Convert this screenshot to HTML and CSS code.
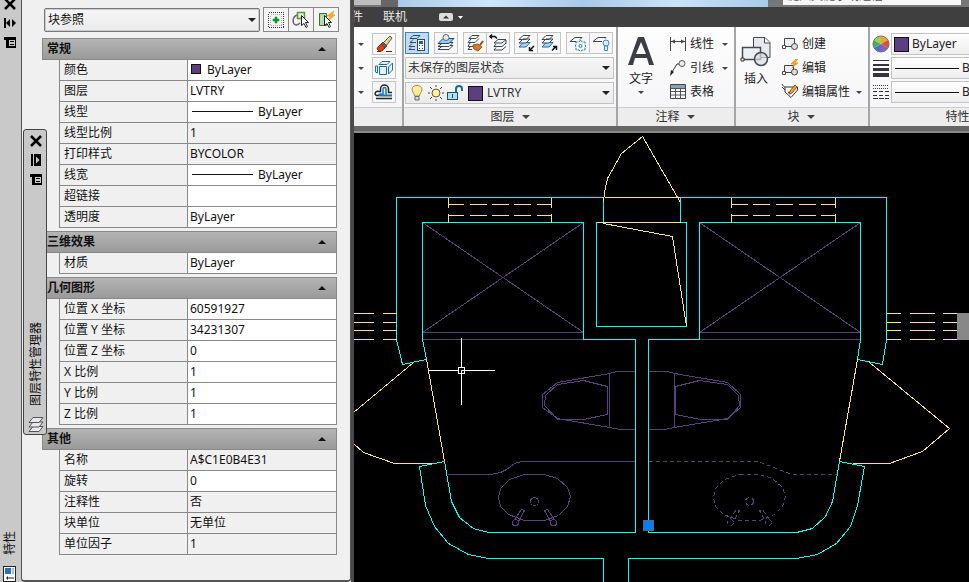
FILE: index.html
```
<!DOCTYPE html>
<html lang="zh-CN">
<head>
<meta charset="utf-8">
<title>图层特性</title>
<link rel="stylesheet" href="styles.css">
</head>
<body>
<svg class="defs" aria-hidden="true">
  <symbol id="i-close" viewBox="0 0 12 12"><path d="M1 1l10 10M11 1L1 11" stroke="#000" stroke-width="2.500"/></symbol>
  <symbol id="i-autohide" viewBox="0 0 12 12"><path d="M0 1h2v10H0zM2 6l4-4v8zM8 2l4 4-4 4z"/></symbol>
  <symbol id="i-pin" viewBox="0 0 12 12"><path d="M1 0h2v12H1z"/><path fill-rule="evenodd" d="M4 0h7v12H4zm2 2.500v7L9.500 6z"/></symbol>
  <symbol id="i-menu" viewBox="0 0 12 12"><path fill-rule="evenodd" d="M0 1h12v11H2V4H0zM5 4v6h6V4z"/><path d="M6 5h4v1H6zM6 8h4v1H6z"/></symbol>
  <symbol id="sheets" viewBox="0 0 18 18"><g class="sheet"><path d="M6 11.500h10l-4 5H2z"/><path d="M6 7h10l-4 5H2z"/><path d="M6 2.500h10l-4 5H2z"/></g></symbol>
</svg>

<aside class="palette">
  <div class="spine">
    <button class="spine-btn" aria-label="关闭"><svg class="i12"><use href="#i-close"/></svg></button>
    <button class="spine-btn" aria-label="自动隐藏"><svg class="i12"><use href="#i-autohide"/></svg></button>
    <button class="spine-btn" aria-label="菜单"><svg class="i12"><use href="#i-menu"/></svg></button>
    <span class="spine-title">特性</span>
    <svg class="spine-logo" viewBox="0 0 14 16"><rect x=".5" y=".5" width="12" height="15" fill="#fff" stroke="#222"/><path d="M2 2h6v6H2z" fill="#2a6fb5"/><path d="M9 2h2v6H9z" fill="#9cc0e0"/><path d="M3 12l2-2v1.500h6v1H5V14z" fill="#222"/></svg>
  </div>
  <div class="sheet-panel">
    <div class="picker">
      <label class="combo object-type"><select aria-label="对象类型"><option>块参照</option></select></label>
      <div class="tools">
        <button aria-label="切换 PICKADD"><svg viewBox="0 0 18 18"><rect x="1.500" y="1.500" width="15" height="15" fill="none" stroke="#333" stroke-dasharray="1 1" shape-rendering="crispEdges"/><rect x="3.500" y="3.500" width="11" height="11" fill="none" stroke="#aaa" stroke-dasharray="1 1" shape-rendering="crispEdges"/><path d="M8 6h2v2h2v2h-2v2H8v-2H6V8h2z" fill="#0a9a1e" stroke="#0a9a1e" stroke-width=".5"/></svg></button>
        <button aria-label="选择对象"><svg viewBox="0 0 18 18"><path d="M5 4C0 6 0 13 4 14c2 0 3-1 4-2" fill="none" stroke="#667" stroke-width="1.500"/><rect x="5.500" y="1.500" width="7" height="6" fill="#dff0d2" stroke="#5e9448" stroke-width="1.500"/><path d="M9.500 4.500v10l2.500-2 2 4 1.500-1-2-4h3z" fill="#fff" stroke="#222"/></svg></button>
        <button aria-label="快速选择"><svg viewBox="0 0 18 18"><path d="M2.500 2.500h7v12h-7z" fill="#b5dda6" stroke="#41702f"/><path d="M17 0l-7 5h3l-2 5 7-6h-3z" fill="#ffb21a" stroke="#d98200" stroke-width=".5"/><path d="M7.500 4.500v10l2.500-2 2 4 1.500-1-2-4h3z" fill="#fff" stroke="#222"/></svg></button>
      </div>
    </div>
    <section class="group">
      <button class="group-head">常规</button>
      <table>
        <tr><th scope="row">颜色</th><td class="edit"><span class="swatch"></span>ByLayer</td></tr>
        <tr><th scope="row"><label for="f-layer">图层</label></th><td class="edit"><input id="f-layer" value="LVTRY"></td></tr>
        <tr><th scope="row">线型</th><td class="edit"><span class="rule"></span>ByLayer</td></tr>
        <tr><th scope="row">线型比例</th><td>1</td></tr>
        <tr><th scope="row">打印样式</th><td>BYCOLOR</td></tr>
        <tr><th scope="row">线宽</th><td class="edit"><span class="rule"></span>ByLayer</td></tr>
        <tr><th scope="row"><label for="f-link">超链接</label></th><td class="edit"><input id="f-link" value=""></td></tr>
        <tr><th scope="row"><label for="f-tr">透明度</label></th><td class="edit"><input id="f-tr" value="ByLayer"></td></tr>
      </table>
    </section>
    <section class="group">
      <button class="group-head">三维效果</button>
      <table>
        <tr><th scope="row"><label for="f-mat">材质</label></th><td class="edit"><input id="f-mat" value="ByLayer"></td></tr>
      </table>
    </section>
    <section class="group">
      <button class="group-head">几何图形</button>
      <table>
        <tr><th scope="row"><label for="f-px">位置 X 坐标</label></th><td class="edit"><input id="f-px" value="60591927"></td></tr>
        <tr><th scope="row"><label for="f-py">位置 Y 坐标</label></th><td class="edit"><input id="f-py" value="34231307"></td></tr>
        <tr><th scope="row"><label for="f-pz">位置 Z 坐标</label></th><td class="edit"><input id="f-pz" value="0"></td></tr>
        <tr><th scope="row"><label for="f-sx">X 比例</label></th><td class="edit"><input id="f-sx" value="1"></td></tr>
        <tr><th scope="row"><label for="f-sy">Y 比例</label></th><td class="edit"><input id="f-sy" value="1"></td></tr>
        <tr><th scope="row"><label for="f-sz">Z 比例</label></th><td class="edit"><input id="f-sz" value="1"></td></tr>
      </table>
    </section>
    <section class="group">
      <button class="group-head">其他</button>
      <table>
        <tr><th scope="row">名称</th><td>A$C1E0B4E31</td></tr>
        <tr><th scope="row"><label for="f-rot">旋转</label></th><td class="edit"><input id="f-rot" value="0"></td></tr>
        <tr><th scope="row">注释性</th><td>否</td></tr>
        <tr><th scope="row">块单位</th><td>无单位</td></tr>
        <tr><th scope="row">单位因子</th><td>1</td></tr>
      </table>
    </section>
  </div>
  <div class="floating">
    <button class="spine-btn" aria-label="关闭"><svg class="i12"><use href="#i-close"/></svg></button>
    <button class="spine-btn" aria-label="锚定"><svg class="i12"><use href="#i-pin"/></svg></button>
    <button class="spine-btn" aria-label="菜单"><svg class="i12"><use href="#i-menu"/></svg></button>
    <span class="spine-title">图层特性管理器</span>
    <svg class="i18"><use href="#sheets"/></svg>
  </div>
</aside>

<main class="app">
  <header class="titlebar">
    <span class="tb-light"></span><span class="tb-dark"></span><span class="tb-blue"></span>
    <span class="tb-search">键入关键字或短语</span><span class="tb-end"></span>
  </header>
  <nav class="tabs">
    <a href="#plugins" class="cut">插件</a>
    <a href="#online">联机</a>
    <button class="minimize" aria-label="最小化功能区"><svg viewBox="0 0 26 8"><rect width="14" height="8" rx="2" fill="#ddd"/><path d="M4 5.500h6L7 2.500z" fill="#333"/><path d="M19 3h5l-2.500 3z" fill="#fff"/></svg></button>
  </nav>
  <div class="ribbon">
    <section class="panel modify">
      <div class="body">
        <div class="mod-row"><i class="caret"></i><button class="tool" aria-label="删除"><svg viewBox="0 0 20 20"><path d="M3 17.500h4M12 17.500h6" stroke="#333"/><path d="M9 9l7-7 2 2-6 8z" fill="#f1cf92" stroke="#554"/><path d="M7 10l2-2 4 4-2 2z" fill="#5a626a" stroke="#444"/><path d="M4 13l3-3 4 4-3 3H5l-2-2z" fill="#d9430f" stroke="#a32a00"/></svg></button></div>
        <div class="mod-row"><i class="caret"></i><button class="tool" aria-label="分解"><svg viewBox="0 0 20 20"><g fill="#e4f2fc" stroke="#1a6ea8"><path d="M5.500 8.500h7v8h-7z"/><path d="M5 6.500l3-3h8l-3 3z"/><path d="M14.500 9l4-4v7l-4 4z"/><path d="M3.500 8v7l-2-1V8z"/></g></svg></button></div>
        <div class="mod-row"><i class="caret"></i><button class="tool" aria-label="偏移"><svg viewBox="0 0 20 20"><path d="M2 16.500h16" stroke="#222" stroke-width="1.500"/><path d="M18 10.500h-3.500V7a4 4 0 0 0-8 0v2.500h-2a2 2 0 0 0-2 4H18" fill="none" stroke="#222" stroke-width="1.500"/><path d="M18 13.500H6.500c-2 0-2-1.500 0-1.500H9V7c0-2 3-2 3 0v6" fill="none" stroke="#167bc4" stroke-width="1.500"/></svg></button></div>
      </div>
      <h2 class="title"></h2>
    </section>

    <section class="panel layers">
      <div class="body">
        <div class="bar">
          <div class="set"><button class="tool on" aria-label="图层特性"><svg viewBox="0 0 20 20"><g class="ln"><path d="M6 2.500h7l-3 3H3zM6 6.500L3 9.500h6M5 10.500l-3 3h6M8 16.500H2l2-2"/></g><rect x="10.500" y="6.500" width="7" height="11" fill="#fff" stroke="#345"/><path d="M12 8h4v3h-4z" fill="#1b65a8"/><path d="M12 12h1v1h-1zm3 0h1v1h-1zm-3 3h1v1h-1zm3 0h1v1h-1z" fill="#345"/></svg></button></div>
          <div class="set"><button class="tool" aria-label="置为当前"><svg viewBox="0 0 20 20"><g class="ln full"><path d="M7 12.500h10l-4 4H2z"/><path d="M7 9.500h10l-4 4H2z"/></g><path d="M7 5.500h11l-5 5H2z" fill="#8fcbf2" stroke="#1c4d75"/><circle cx="10" cy="4.500" r="3" fill="#e8e8e8" stroke="#667"/></svg></button></div>
          <div class="set"><button class="tool" aria-label="匹配"><svg viewBox="0 0 20 20"><g class="ln"><path d="M7 2.500h7l-3 3H4zM6 6l-3 3.500h7l4-4M5 10l-2 3.500h5M5 14l-2 2.500h4"/></g><path d="M18 8l-3 4" stroke="#875322" stroke-width="2"/><path d="M8 12l5-1 4 3-4 4-4-2z" fill="#d97c2a" stroke="#9b540c"/></svg></button><button class="tool" aria-label="上一个"><svg viewBox="0 0 20 20"><path d="M2 3.500h5l2 2M4 1.500l-2 2 2 2" fill="none" stroke="#111" stroke-width="1.500"/><g class="ln"><path d="M10 6.500h8l-4 3.500H6zM8 11l-2 2.500h8l4-3.500M8 14.500l-2 2.500h8l4-3.500M18 7v3.500"/></g></svg></button></div>
          <div class="set"><button class="tool" aria-label="隔离"><svg viewBox="0 0 20 20"><path d="M7 9.500h7l-4 4.500H3z" fill="#a4d8f8" stroke="#1470b8"/><g class="ln full"><path d="M7 6h7l-4 4H3zM7 2.500h7l-4 4H3z"/></g><path d="M18 13l-4 4M13.500 14v3.500H17" fill="none" stroke="#111" stroke-width="1.500"/></svg></button><button class="tool" aria-label="取消隔离"><svg viewBox="0 0 20 20"><path d="M7 9.500h7l-4 4.500H3z" fill="#a4d8f8" stroke="#1470b8"/><g class="ln full"><path d="M7 6h7l-4 4H3zM7 2.500h7l-4 4H3z"/></g><path d="M13 17.500l4-4M14 13.500h3.500V17" fill="none" stroke="#111" stroke-width="1.500"/></svg></button></div>
          <div class="set"><button class="tool" aria-label="冻结"><svg viewBox="0 0 20 20"><path d="M8 8.500H2l5-4h7l-2 2" fill="none" stroke="#445"/><path d="M12.500 7l1.500 2h3v3l1 1-1 1v3h-3l-1.500 1.500L11 17H8v-3l-1-1 1-1V9h3z" fill="#fff" stroke="#1680c8" stroke-dasharray="3 1"/><circle cx="12.500" cy="13" r="1.500" fill="none" stroke="#1680c8"/></svg></button><button class="tool" aria-label="关闭图层"><svg viewBox="0 0 20 20"><path d="M11 8.500H2l5-4h8l-1 1" fill="none" stroke="#445"/><circle cx="15" cy="10" r="3" fill="#d6eefc" stroke="#3b8fc8"/><path d="M13.500 13h3v4.500h-3z" fill="#d6eefc" stroke="#3b8fc8"/></svg></button></div>
        </div>
        <label class="combo"><select aria-label="图层状态"><option>未保存的图层状态</option></select></label>
        <div class="combo layer-combo">
          <svg viewBox="0 0 18 18"><path d="M6.500 12C6.500 9 4 8 4 5.500 4 0 14 0 14 5.500c0 2.500-2.500 3.500-2.500 6.500z" fill="#ffeb9b" stroke="#a38a37"/><path d="M7 12.500h4v3.500H7z" fill="#ddd" stroke="#666"/></svg>
          <svg viewBox="0 0 18 18"><path d="M9 1v2M9 15v2M1 9h2M15 9h2M3 3l2 2M13 13l2 2M15 3l-2 2M3 15l2-2" stroke="#444"/><circle cx="9" cy="9" r="4" fill="#ffeea3" stroke="#665c31"/></svg>
          <svg viewBox="0 0 18 18"><path d="M10 8V5c0-4 6-4 6 0v2" fill="none" stroke="#176b9d" stroke-width="2"/><rect x="1.500" y="8.500" width="10" height="7" fill="#aedff5" stroke="#264f68"/><path d="M6.500 10v4" stroke="#264f68"/></svg>
          <span class="chip"></span>
          <select aria-label="图层"><option>LVTRY</option></select>
        </div>
      </div>
      <h2 class="title">图层<i class="caret big"></i></h2>
    </section>

    <section class="panel annotate">
      <div class="body cols">
        <button class="large"><svg viewBox="0 0 32 32"><path fill="#3c3e46" fill-rule="evenodd" d="M13 2h6l10 28h-5l-2-7H10l-2 7H3zm3 5l-5 12h10z"/></svg>文字<i class="caret"></i></button>
        <div class="items">
          <button class="item"><svg viewBox="0 0 18 18"><path d="M1.500 2v14M16.500 2v14M2 6.500h14" stroke="#444" fill="none"/><path d="M2 6.500l4-2v4zM16 6.500l-4-2v4z" fill="#444"/></svg>线性<i class="caret"></i></button>
          <button class="item"><svg viewBox="0 0 18 18"><circle cx="13" cy="4.500" r="3" fill="#eee" stroke="#555"/><path d="M10 5H8L3 13" fill="none" stroke="#333"/><path d="M1 17l1-6 3 2z" fill="#222"/></svg>引线<i class="caret"></i></button>
          <button class="item"><svg viewBox="0 0 18 18"><path d="M1.500 1.500h15v14h-15z" fill="#fff" stroke="#444"/><path d="M2 2h14v3H2z" fill="#8aa0b5"/><path d="M2 5.500h14M2 8.500h14M2 12h14M6.500 5v11M11.500 5v11" stroke="#555"/></svg>表格</button>
        </div>
      </div>
      <h2 class="title">注释<i class="caret big"></i></h2>
    </section>

    <section class="panel block">
      <div class="body cols">
        <button class="large"><svg viewBox="0 0 32 32"><path d="M13.500 2.500H25l5 5v15H13.500z" fill="#e5e8ec" stroke="#444b55"/><path d="M24.500 3v5H30" fill="#fff" stroke="#444b55"/><path d="M2.500 12.500h18v12h-18z" fill="#edf0f3" stroke="#444b55" stroke-width="1.500"/><circle cx="21" cy="24" r="6.500" fill="#d8dde2" fill-opacity=".7" stroke="#444b55" stroke-width="1.500"/><path d="M1 23h3v3H1z" fill="#fff" stroke="#333"/></svg>插入</button>
        <div class="items">
          <button class="item"><svg viewBox="0 0 18 18"><path d="M3.500 3.500h10v8h-10z" fill="#edf0f3" stroke="#444"/><circle cx="13.500" cy="11.500" r="3" fill="#ddd" stroke="#444"/><path d="M1.500 10.500h3v3h-3z" fill="#fff" stroke="#444"/></svg>创建</button>
          <button class="item"><svg viewBox="0 0 18 18"><path d="M3.500 6.500h9v7h-9z" fill="#edf0f3" stroke="#444"/><circle cx="13.500" cy="13" r="3" fill="#ddd" stroke="#444"/><path d="M1.500 12.500h3v3h-3z" fill="#fff" stroke="#444"/><path d="M15 0l-5 5h3l-2 4 6-5h-3l3-4z" fill="#ffab16" stroke="#d77900" stroke-width=".5"/></svg>编辑</button>
          <button class="item"><svg viewBox="0 0 18 18"><path d="M1 1c1 2 2 3 4 3h11.500v3L10 14.500 4 9V4" fill="#fff" stroke="#333"/><path d="M1 4l3 3M7 9l3 2" stroke="#333"/><path d="M14 2l2 2-5 6-3 1 1-3z" fill="#f5a23c" stroke="#8b4e10"/></svg>编辑属性<i class="caret"></i></button>
        </div>
      </div>
      <h2 class="title">块<i class="caret big"></i></h2>
    </section>

    <section class="panel props">
      <div class="body">
        <div class="prop"><svg viewBox="0 0 18 18"><g transform="translate(9 9)"><path d="M0 0V-8A8 8 0 0 1 7-4z" fill="#f0a531"/><path d="M0 0L7-4A8 8 0 0 1 7 4z" fill="#dd4f3b"/><path d="M0 0L7 4A8 8 0 0 1 0 8z" fill="#9659b5"/><path d="M0 0V8A8 8 0 0 1-7 4z" fill="#4573cf"/><path d="M0 0L-7 4A8 8 0 0 1-7-4z" fill="#4cab62"/><path d="M0 0L-7-4A8 8 0 0 1 0-8z" fill="#a5cf4a"/><circle r="8" fill="none" stroke="#777"/></g></svg><button class="field"><span class="chip"></span>ByLayer</button></div>
        <div class="prop"><svg viewBox="0 0 18 18"><path d="M1 1h16v1H1zM1 5h16v2H1zM1 9h16v3H1zM1 14h16v4H1z" fill="#33343c"/></svg><button class="field"><span class="rule"></span>ByLayer</button></div>
        <div class="prop"><svg viewBox="0 0 18 18"><path d="M1 2.500h16M1 5.500h16" stroke="#444" stroke-dasharray="1 1"/><path d="M1 8.500h16M1 12.500h16" stroke="#333" stroke-dasharray="4 2"/><path d="M1 15.500h16" stroke="#333" stroke-dasharray="5 1"/></svg><button class="field"><span class="rule"></span>ByLayer</button></div>
      </div>
      <h2 class="title">特性<i class="caret big"></i></h2>
    </section>
  </div>

  <svg class="drawing" viewBox="353.500 132.500 615 449" preserveAspectRatio="xMinYMin slice" role="img" aria-label="图纸">
    <g class="violet">
      <path d="M422 222L583 332M583 222L422 332H583M422 339H583M699 222L860 332M860 222L699 332H860M699 339H860"/>
      <path d="M635 371H616L609 373 557 382 542 394V407L557 418 609 427 620 429H635M609 373V427M607 386L583 380 557 384 545 395 544 405 557 419H583L607 414z"/>
      <path d="M648 371H667L674 373 727 382 740 394V407L727 418 674 427 664 429H648M674 373V427M675 386L699 380 727 384 738 395 739 405 727 419H700L675 414z"/>
      <path d="M447 474H490L500 472 506 469 514 463 521 461H635"/>
      <path d="M524 474H544L557 478 567 487 570 496 567 506 558 515 544 520H524L508 514 500 506 498 497 500 488 509 479z"/>
      <circle cx="534" cy="501" r="4"/><circle cx="515" cy="522" r="3"/><circle cx="553" cy="522" r="3"/>
      <path d="M514 519L521 509 524 510 518 521M554 519L547 509 544 510 550 521"/>
      <g stroke-dasharray="4 3">
        <path d="M648 461H758L791 474H836"/>
        <path d="M739 474H759L772 478 782 487 785 496 782 506 773 515 759 520H739L723 514 715 506 713 497 715 488 724 479z"/>
        <circle cx="749" cy="501" r="4"/><circle cx="730" cy="522" r="3"/><circle cx="768" cy="522" r="3"/>
        <path d="M729 519L736 509 739 510 733 521M769 519L762 509 759 510 765 521"/>
      </g>
    </g>
    <g class="cyan">
      <path d="M603 222V197H396V339L402 364 426 359 422 339V222H583V339H635V532H488L473 528 459 517 451 501 444 461 419 466 425 505 434 526 448 543 468 554 488 558H603V583"/>
      <path d="M603 222H596V326H686V222H680V197H886V339L882 364 857 359 860 339V222H699V339H648V532H796L812 528 825 516 832 501 839 461 864 466 857 505 850 526 836 543 817 554 796 558H628V583"/>
    </g>
    <g class="sand">
      <path d="M604 197H679M597 222H680M603 202L604 192 607 178 621 153 642 136 680 202M603 223L672 236 686 326"/>
      <path d="M448 197V207M448 213V222M551 197V207M551 213V222M731 197V207M731 213V222M835 197V207M835 213V222"/>
      <path d="M448 204H463M469 204H486M491 204H508M513 204H530M536 204H551M448 215H463M469 215H486M491 215H508M513 215H530M536 215H551"/>
      <path d="M731 204H747M752 204H769M775 204H792M798 204H815M820 204H835M731 215H747M752 215H769M775 215H792M798 215H815M820 215H835"/>
      <path d="M353 313H373M382 313H396M353 322H373M382 322H396M353 330H373M382 330H396M353 339H373M382 339H396"/>
      <path d="M886 313H900M909 313H934M942 313H957M886 322H900M909 322H934M942 322H957M886 330H900M909 330H934M942 330H957M886 339H900M909 339H934M942 339H957"/>
      <path d="M426 359L444 461M413 362L353 412M353 443L363 452 394 463H431M857 359L839 461M869 362L949 428 922 451 889 463H852"/>
    </g>
    <rect x="956.500" y="312.500" width="13" height="27" fill="#888"/>
    <rect x="643" y="520" width="10" height="10" fill="#0080ff" stroke="#666"/>
    <path d="M427 370H458M464 370H494M461 337V367M461 373V404M458 367H464V373H458zM460 370H463M461 369V372" fill="none" stroke="#fff"/>
  </svg>
</main>
</body>
</html>
```

FILE: styles.css
```
* { box-sizing: border-box; }
html, body { height: 100%; margin: 0; }
body {
  display: flex;
  overflow: hidden;
  background: #000;
  color: #111;
  font: 12px/18px "Noto Sans", "Noto Sans CJK SC", sans-serif;
}
button, input, select { font: inherit; color: inherit; margin: 0; padding: 0; border: 0; background: none; border-radius: 0; }
a { color: inherit; text-decoration: none; }
.defs { position: absolute; width: 0; height: 0; }
svg { flex: none; display: block; }
.i12 { width: 12px; height: 12px; }
.i18 { width: 18px; height: 18px; }
.sheet { fill: #e8e8ee; stroke: #555; }
.ln { fill: none; stroke: #3c4754; }
.ln.full { fill: #f7f7f7; }

/* properties palette */
.palette { position: relative; display: flex; flex: 0 0 354px; background: #c9c9c9; border-right: 3px solid #4a4a4a; }
.spine { display: flex; flex-direction: column; align-items: center; width: 21px; padding: 0 1px 0 0; }
.spine-btn { display: block; height: 19px; }
.spine .spine-btn:first-child { margin-top: -6px; }
.spine-title { margin-top: auto; writing-mode: vertical-rl; text-orientation: sideways; transform: rotate(180deg); }
.spine-logo { width: 14px; height: 16px; margin-top: 11px; }
.sheet-panel {
  flex: 1;
  padding: 7px 11px 0 20px;
  background: #f0f0f0;
  border: solid #555;
  border-width: 0 1px 2px;
  border-radius: 0 0 4px 4px;
}
.picker { display: flex; gap: 3px; height: 31px; padding-left: 2px; }
.object-type { flex: 1; height: 24px; margin-top: 1px; border: 1px solid #777; border-radius: 2px; box-shadow: inset 0 0 0 1px #ccc; }
.tools { display: flex; height: 25px; border: 1px solid #888; }
.tools button { width: 25px; padding: 2px 3px; border-left: 1px solid #888; background: #f4f4f4; }
.tools button:first-child { border-left: 0; width: 24px; }
.tools svg { width: 18px; height: 18px; }
.combo { position: relative; display: flex; align-items: center; background: linear-gradient(#f6f6f6, #ebebeb); }
.combo select { flex: 1; min-width: 0; appearance: none; padding-left: 3px; outline: 0; }
.combo::after { content: ""; position: absolute; right: 3px; border: 4px solid transparent; border-top: 4px solid #222; border-bottom: 0; pointer-events: none; }
.group { margin: 0 2px 3px 0; }
.group-head {
  display: flex;
  align-items: center;
  justify-content: space-between;
  width: 100%;
  height: 22px;
  padding: 0 10px 0 4px;
  border: 1px solid #888;
  background: linear-gradient(#b4b4b4, #9a9a9a);
  font-weight: 700;
}
.group-head::after { content: ""; border: 4px solid transparent; border-bottom: 4px solid #111; border-top: 0; }
.group table { width: calc(100% - 17px); margin-left: 17px; border-collapse: separate; border-spacing: 0; border-left: 1px solid #888; table-layout: fixed; }
.group th, .group td { height: 21px; padding: 0 0 0 4px; border: solid #888; border-width: 0 1px 1px 0; text-align: left; font-weight: 400; white-space: nowrap; line-height: 20px; }
.group th { width: 128px; }
.group td { padding-left: 2px; }
.group td.edit { background: #fff; }
.group td input { display: block; width: 100%; height: 20px; outline: 0; }
.swatch { display: inline-block; width: 10px; height: 10px; margin: 0 6px 0 1px; border: 1px solid #111; background: #5c3f80; }
.rule { display: inline-block; flex: none; width: 61px; height: 1px; margin: 0 5px 4px 2px; background: #111; }

/* collapsed layer manager, floating over the palette */
.floating {
  position: absolute;
  top: 129px;
  left: 23px;
  display: flex;
  flex-direction: column;
  align-items: center;
  width: 24px;
  height: 306px;
  padding: 1px 0 1px 2px;
  border: 1px solid #444;
  border-radius: 3px;
  background: #c9c9c9;
}
.floating .spine-title { margin-bottom: 9px; }

/* application window */
.app { display: flex; flex: 1; flex-direction: column; min-width: 0; overflow: hidden; }
.titlebar { display: flex; flex: none; height: 7px; background: #777; overflow: hidden; }
.tb-light { width: 27px; height: 5px; background: #bdbdbd; }
.tb-dark { width: 17px; background: #666; }
.tb-blue { flex: 1; background: linear-gradient(90deg, #a9cbe9, #cfe6fa 25%, #a7c9ea 50%, #c9e2f8 75%, #a8cbea); }
.tb-search { display: flex; align-items: flex-end; width: 178px; height: 5px; margin-left: 15px; padding-left: 4px; background: #f6f6f6; color: #555; line-height: 18px; }
.tb-end { width: 8px; }
.tabs { display: flex; flex: none; align-items: center; height: 20px; background: #3f3f3f; color: #e6e6e6; line-height: 20px; overflow: hidden; }
.tabs .cut { margin: 0 20px 0 -15px; white-space: nowrap; }
.minimize { margin-left: 32px; }
.minimize svg { width: 26px; height: 8px; }
.ribbon { display: flex; flex: none; height: 104px; background: #fafafa; border-bottom: 5px solid #666; }
.panel { display: flex; flex: none; flex-direction: column; border-right: 2px solid #a5a5a5; }
.body { flex: 1; padding: 5px 2px 0; background: linear-gradient(#fdfdfd, #f6f6f8); }
.title { display: flex; align-items: center; justify-content: center; gap: 7px; height: 19px; margin: 0; border-top: 1px solid #ccc; background: #ededed; font: inherit; color: #333; }
.caret { border: 3px solid transparent; border-top: 3px solid #444; border-bottom: 0; }
.caret.big { border-width: 4px; border-bottom: 0; }
.tool { width: 24px; height: 22px; padding: 0 1px; border: 1px solid #c4c4c4; background: #f7f7f7; }
.tool svg { width: 20px; height: 20px; }
.tool.on { border-color: #3d7fc0; background: #bcdcf8; }
.modify { width: 50px; }
.modify .body { display: grid; align-content: start; gap: 2px; padding: 6px 6px 0 4px; }
.mod-row { display: flex; align-items: center; justify-content: space-between; }
.layers { width: 214px; }
.layers .body { padding: 5px 2px 0 1px; }
.bar { display: flex; justify-content: space-between; padding-right: 1px; }
.set { display: flex; }
.set .tool + .tool { margin-left: -1px; }
.layers .combo { height: 22px; margin-top: 3px; border: 1px solid #c2c2c2; color: #333; }
.layers .combo select { padding-left: 2px; }
.layer-combo { gap: 1px; padding-left: 2px; }
.layer-combo svg { width: 18px; height: 18px; }
.chip { flex: none; width: 15px; height: 15px; margin: 0 1px 0 3px; border: 1px solid #111; background: #5c3f80; }
.cols { display: flex; justify-content: space-between; }
.large { display: flex; flex-direction: column; align-items: center; width: 46px; height: 66px; margin-top: 3px; color: #222; line-height: 18px; }
.large svg { width: 32px; height: 32px; margin-bottom: 3px; }
.large .caret { margin-top: 3px; }
.items { display: grid; flex: 1; align-content: start; color: #222; }
.item { display: flex; align-items: center; gap: 3px; height: 24px; text-align: left; white-space: nowrap; }
.item svg { width: 18px; height: 18px; }
.item .caret { margin-left: auto; }
.annotate { width: 118px; }
.annotate .body { padding: 5px 6px 0 0; gap: 5px; }
.block { width: 134px; }
.block .body { padding: 5px 6px 0 0; gap: 5px; }
.block .large { width: 40px; }
.block .title, .annotate .title { padding-right: 2px; }
.props { flex: 1 0 192px; }
.props .body { display: grid; align-content: start; gap: 2px; padding: 6px 0 0 2px; }
.prop { display: flex; align-items: center; gap: 1px; }
.prop svg { width: 18px; height: 18px; }
.field { display: flex; flex: 1; align-items: center; gap: 2px; height: 22px; border: 1px solid #c2c2c2; background: linear-gradient(#fff, #ededed); color: #222; }
.field .rule { margin: 0 1px 0 3px; width: 64px; }
.field .chip { margin-left: 2px; }
.drawing { flex: 1; width: 100%; min-height: 0; border-top: 2px solid #8a8a8a; background: #000; fill: none; stroke-width: 1; shape-rendering: crispEdges; }
.violet { stroke: #5c3f80; }
.cyan { stroke: #0ff; }
.sand { stroke: #ffe080; }
```
